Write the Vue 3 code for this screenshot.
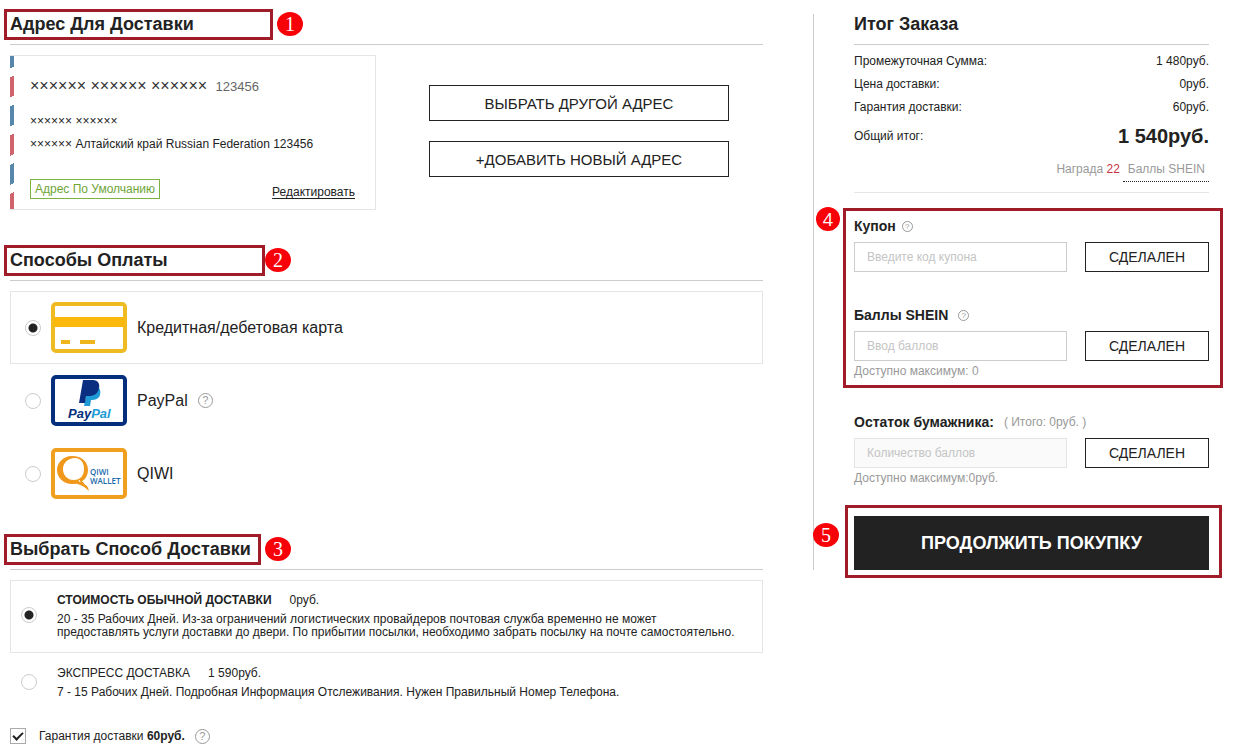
<template>
  <div class="checkout">
    <main class="main-col">
      <section>
        <h2 class="section-title">
          <span class="mark mark-address">Адрес Для Доставки</span>
          <span class="step step-spaced">1</span>
        </h2>
        <div class="address-row">
          <div class="address-card">
            <p class="receiver">×××××× ×××××× ×××××× <span class="phone">123456</span></p>
            <p class="address-line street">×××××× ××××××</p>
            <p class="address-line">×××××× Алтайский край Russian Federation 123456</p>
            <div class="address-footer">
              <span class="default-tag">Адрес По Умолчанию</span>
              <a href="#" class="edit-link">Редактировать</a>
            </div>
          </div>
          <div class="address-actions">
            <button type="button" class="btn-outline btn-address">ВЫБРАТЬ ДРУГОЙ АДРЕС</button>
            <button type="button" class="btn-outline btn-address">+ДОБАВИТЬ НОВЫЙ АДРЕС</button>
          </div>
        </div>
      </section>

      <section class="payment">
        <h2 class="section-title">
          <span class="mark mark-payment">Способы Оплаты</span>
          <span class="step">2</span>
        </h2>
        <label
          v-for="p in payments"
          :key="p.id"
          class="pay-option"
          :class="{ active: payment === p.id }"
        >
          <input type="radio" name="payment" class="radio" :value="p.id" v-model="payment" />
          <svg v-if="p.id === 'card'" class="pay-icon" viewBox="0 0 76 51">
            <rect x="2" y="2" width="72" height="47" rx="3" fill="#fff" stroke="#eebb22" stroke-width="4" />
            <rect x="2" y="15" width="72" height="10" fill="#fdb90b" />
            <path d="M10 40h9M29 40h15" stroke="#efb51c" stroke-width="4" />
          </svg>
          <svg v-else-if="p.id === 'paypal'" class="pay-icon" viewBox="0 0 76 51">
            <rect x="2" y="2" width="72" height="47" rx="3" fill="#fff" stroke="#052f7c" stroke-width="4" />
            <path d="M37 11h8c4 1 5 5 4 9s-5 5-9 5l-1 6h-6z" fill="#1e9bd7" />
            <path d="M32 5h10c5 0 7 4 6 8-1 6-5 8-10 8h-3l-1 7h-6z" fill="#0a2f80" />
            <text x="17" y="43" class="paypal-text" fill="#052f7c">Pay<tspan fill="#1e9bd7">Pal</tspan></text>
          </svg>
          <svg v-else class="pay-icon" viewBox="0 0 76 51">
            <rect x="2" y="2" width="72" height="47" rx="3" fill="#fff" stroke="#f0a01e" stroke-width="4" />
            <path
              fill-rule="evenodd"
              d="M21 8C12 8 6 15 6 22c0 8 7 14 15 14 10 0 16-6 16-14S31 8 21 8zm3 2c6 0 9 5 9 11 0 7-4 11-10 11-7 0-11-5-11-11S17 10 24 10z"
              fill="#f0981c"
            />
            <path d="M18 35c7 0 13 1 20 8-1-5-4-8-8-10z" fill="#f0981c" />
            <path d="M28 32l1 2M33 35l2 2" stroke="#fff" stroke-width="1" />
            <text x="39" y="27" class="qiwi-text">QIWI</text>
            <text x="39" y="36" class="qiwi-text">WALLET</text>
          </svg>
          <span class="pay-name">{{ p.name }}</span>
          <span v-if="p.help" class="help">?</span>
        </label>
      </section>

      <section class="shipping">
        <h2 class="section-title">
          <span class="mark mark-shipping">Выбрать Способ Доставки</span>
          <span class="step step-spaced">3</span>
        </h2>
        <label
          v-for="s in shippings"
          :key="s.id"
          class="ship-option"
          :class="{ active: shipping === s.id }"
        >
          <input type="radio" name="shipping" class="radio" :value="s.id" v-model="shipping" />
          <span class="ship-info">
            <span class="ship-head"><span class="ship-name">{{ s.name }}</span>{{ s.price }}</span>
            <span class="ship-desc">{{ s.desc }}</span>
          </span>
        </label>
        <div class="guarantee">
          <input id="guarantee" type="checkbox" class="checkbox" v-model="guarantee" />
          <label for="guarantee">Гарантия доставки <b>60руб.</b></label>
          <span class="help">?</span>
        </div>
      </section>
    </main>

    <aside class="summary">
      <h2 class="summary-title">Итог Заказа</h2>
      <dl class="totals">
        <div v-for="t in totals" :key="t.label" class="total-row">
          <dt>{{ t.label }}</dt>
          <dd>{{ t.value }}</dd>
        </div>
        <div class="total-row grand">
          <dt>Общий итог:</dt>
          <dd>1 540руб.</dd>
        </div>
      </dl>
      <p class="reward">Награда <span class="reward-num">22</span><span class="reward-points">Баллы SHEIN</span></p>

      <div class="discounts">
        <span class="step step-four">4</span>
        <div class="field">
          <div class="field-label">
            <label for="coupon">Купон</label>
            <span class="help help-small">?</span>
          </div>
          <div class="field-row">
            <input id="coupon" type="text" v-model="coupon" placeholder="Введите код купона" />
            <button type="button" class="btn-outline btn-apply">СДЕЛАЛЕН</button>
          </div>
        </div>
        <div class="field field-points">
          <div class="field-label">
            <label for="points">Баллы SHEIN</label>
            <span class="help help-small help-far">?</span>
          </div>
          <div class="field-row">
            <input id="points" type="text" v-model="points" placeholder="Ввод баллов" />
            <button type="button" class="btn-outline btn-apply">СДЕЛАЛЕН</button>
          </div>
          <p class="note">Доступно максимум: 0</p>
        </div>
      </div>

      <div class="field field-wallet">
        <div class="field-label">
          <label for="wallet">Остаток бумажника:</label>
          <span class="wallet-total">( Итого: 0руб. )</span>
        </div>
        <div class="field-row">
          <input id="wallet" type="text" placeholder="Количество баллов" disabled />
          <button type="button" class="btn-outline btn-apply">СДЕЛАЛЕН</button>
        </div>
        <p class="note">Доступно максимум:0руб.</p>
      </div>

      <div class="submit">
        <span class="step step-five">5</span>
        <button type="button" class="btn-submit">ПРОДОЛЖИТЬ ПОКУПКУ</button>
      </div>
    </aside>
  </div>
</template>

<script setup>
import { ref } from 'vue'

const payment = ref('card')
const shipping = ref('standard')
const guarantee = ref(true)
const coupon = ref('')
const points = ref('')

const payments = [
  { id: 'card', name: 'Кредитная/дебетовая карта' },
  { id: 'paypal', name: 'PayPal', help: true },
  { id: 'qiwi', name: 'QIWI' }
]

const shippings = [
  {
    id: 'standard',
    name: 'СТОИМОСТЬ ОБЫЧНОЙ ДОСТАВКИ',
    price: '0руб.',
    desc: '20 - 35 Рабочих Дней. Из-за ограничений логистических провайдеров почтовая служба временно не может предоставлять услуги доставки до двери. По прибытии посылки, необходимо забрать посылку на почте самостоятельно.'
  },
  {
    id: 'express',
    name: 'ЭКСПРЕСС ДОСТАВКА',
    price: '1 590руб.',
    desc: '7 - 15 Рабочих Дней. Подробная Информация Отслеживания. Нужен Правильный Номер Телефона.'
  }
]

const totals = [
  { label: 'Промежуточная Сумма:', value: '1 480руб.' },
  { label: 'Цена доставки:', value: '0руб.' },
  { label: 'Гарантия доставки:', value: '60руб.' }
]
</script>

<style>
body {
  margin: 0;
  background: #fff;
}
</style>

<style scoped>
.checkout {
  display: flex;
  align-items: flex-start;
  gap: 50px;
  padding: 4px 29px 8px 10px;
  font-family: "Liberation Sans", Arial, sans-serif;
  font-size: 12px;
  color: #222;
}

h2,
p,
dl,
dd {
  margin: 0;
}

button,
input {
  font-family: inherit;
  box-sizing: border-box;
  margin: 0;
}

.main-col {
  flex: 1;
  min-width: 0;
}

.section-title {
  display: flex;
  align-items: center;
  height: 40px;
  margin-bottom: 10px;
  border-bottom: 1px solid #ccc;
  font-size: 18px;
}

/* red frame around a section title */
.mark {
  box-sizing: border-box;
  height: 31px;
  margin-left: -6px;
  padding-left: 3px;
  border: 3px solid #a01c28;
  line-height: 25px;
}

.mark-address {
  width: 269px;
}

.mark-payment {
  width: 261px;
}

.mark-shipping {
  width: 257px;
}

.step {
  width: 26px;
  height: 24px;
  border-radius: 50%;
  background: #f80008;
  color: #fff;
  font-family: "Liberation Serif", serif;
  font-size: 20px;
  font-weight: normal;
  line-height: 24px;
  text-align: center;
}

.step-spaced {
  margin-left: 4px;
}

.address-row {
  display: flex;
  gap: 53px;
}

.address-card {
  position: relative;
  box-sizing: border-box;
  width: 366px;
  padding: 20px 20px 10px 19px;
  border: 1px solid #e5e5e5;
}

.address-card::before {
  content: "";
  position: absolute;
  top: 0;
  bottom: 0;
  left: -1px;
  width: 4px;
  background: repeating-linear-gradient(153deg, #5787ab 0 11px, #fff 11px 19px, #d0646c 19px 37px, #fff 37px 45px, #5787ab 45px 52px);
}

.receiver {
  margin-bottom: 13px;
  color: #333;
  font-size: 16px;
  line-height: 20px;
}

.phone {
  margin-left: 4px;
  color: #666;
  font-size: 13px;
}

.address-line {
  line-height: 23px;
}

.address-footer {
  display: flex;
  align-items: center;
  justify-content: space-between;
  margin-top: 23px;
}

.default-tag {
  padding: 0 4px;
  border: 1px solid #7bb241;
  color: #6ea536;
  line-height: 18px;
}

.edit-link {
  margin-top: 6px;
  color: #222;
  text-underline-offset: 2px;
}

.address-actions {
  display: flex;
  flex: 1;
  flex-direction: column;
  gap: 20px;
  max-width: 300px;
  padding-top: 30px;
}

.btn-outline {
  border: 1px solid #222;
  border-radius: 0;
  background: #fff;
  color: #222;
  cursor: pointer;
}

.btn-address {
  height: 36px;
  font-size: 15px;
}

.payment {
  margin-top: 30px;
}

.pay-option {
  display: flex;
  align-items: center;
  gap: 10px;
  box-sizing: border-box;
  height: 73px;
  padding-left: 14px;
  border: 1px solid transparent;
  font-size: 16px;
}

.pay-option.active,
.ship-option.active {
  border-color: #e5e5e5;
}

.radio {
  flex: none;
  width: 16px;
  height: 16px;
  border: 1px solid #ccc;
  border-radius: 50%;
  appearance: none;
  background: #fff;
}

.radio:checked {
  background: radial-gradient(circle, #222 0 4px, #fff 5px);
}

.pay-icon {
  flex: none;
  width: 76px;
  height: 51px;
}

.paypal-text {
  font-size: 13px;
  font-style: italic;
  font-weight: bold;
}

.qiwi-text {
  fill: #1a6aac;
  font-family: "Open Sans", sans-serif;
  font-size: 8px;
  font-weight: 600;
}

.help {
  flex: none;
  box-sizing: border-box;
  width: 15px;
  height: 15px;
  border: 1px solid #999;
  border-radius: 50%;
  color: #999;
  font-size: 11px;
  line-height: 13px;
  text-align: center;
}

.help-small {
  width: 11px;
  height: 11px;
  font-size: 8px;
  line-height: 9px;
}

.shipping {
  margin-top: 19px;
}

.ship-option {
  display: flex;
  align-items: center;
  gap: 20px;
  padding: 10px 20px 13px 10px;
  border: 1px solid transparent;
}

.ship-info {
  display: flex;
  flex-direction: column;
  gap: 4px;
}

.ship-head {
  line-height: 18px;
}

.ship-name {
  margin-right: 18px;
}

.active .ship-name {
  font-weight: bold;
}

.ship-desc {
  line-height: 13px;
}

.guarantee {
  display: flex;
  align-items: center;
  gap: 10px;
  margin-top: 15px;
}

.guarantee label {
  margin-left: 3px;
}

.checkbox {
  width: 16px;
  height: 16px;
  border: 1px solid #aaa;
  appearance: none;
}

.checkbox:checked::before {
  content: "";
  display: block;
  width: 8px;
  height: 4px;
  margin: 3px 0 0 2px;
  border-bottom: 2px solid #222;
  border-left: 2px solid #222;
  transform: rotate(-45deg);
}

.summary {
  flex: none;
  width: 355px;
  margin-top: 10px;
  padding-left: 40px;
  border-left: 1px solid #ccc;
}

.summary-title {
  padding-bottom: 10px;
  border-bottom: 1px solid #ccc;
  font-size: 18px;
  line-height: 20px;
}

.totals {
  padding-top: 5px;
}

.total-row {
  display: flex;
  align-items: center;
  justify-content: space-between;
  line-height: 23px;
}

.total-row.grand {
  line-height: 34px;
}

.grand dd {
  font-size: 20px;
  font-weight: bold;
}

.reward {
  padding: 4px 0 10px;
  border-bottom: 1px solid #e5e5e5;
  color: #999;
  line-height: 24px;
  text-align: right;
}

.reward-num {
  color: #c8323c;
}

.reward-points {
  display: inline-block;
  margin-left: 3px;
  padding: 0 4px 0 5px;
  border-bottom: 1px dotted #222;
}

.discounts {
  position: relative;
  margin: 15px -14px 0 -11px;
  padding: 5px 11px 3px 8px;
  border: 3px solid #a01c28;
}

.field-label {
  display: flex;
  align-items: center;
  gap: 6px;
  height: 20px;
  font-size: 14px;
}

.field-label label {
  font-weight: bold;
}

.field-row {
  display: flex;
  gap: 18px;
  margin-top: 6px;
}

.field-row input {
  flex: 1;
  min-width: 0;
  height: 30px;
  padding: 0 12px;
  border: 1px solid #ccc;
  border-radius: 0;
  font-size: 12px;
}

.field-row input:disabled {
  border-color: #e5e5e5;
  background: #fafafa;
}

.field-row input::placeholder {
  color: #c4c4c4;
}

.btn-apply {
  width: 124px;
  height: 30px;
  font-size: 14px;
}

.field-points {
  margin-top: 33px;
}

.help-far {
  margin-left: 4px;
}

.note {
  color: #999;
  line-height: 21px;
}

.field-wallet {
  margin-top: 24px;
}

.wallet-total {
  margin-left: 4px;
  color: #999;
  font-size: 12px;
}

.submit {
  position: relative;
  margin-top: 27px;
}

.submit::after {
  content: "";
  position: absolute;
  inset: -11px -13px -8px -9px;
  border: 3px solid #a01c28;
  pointer-events: none;
}

.step-four,
.step-five {
  position: absolute;
}

.step-four {
  top: -4px;
  left: -30px;
  width: 24px;
  font-family: "Open Sans", sans-serif;
  font-size: 18px;
}

.step-five {
  top: 7px;
  left: -41px;
}

.btn-submit {
  display: block;
  width: 100%;
  height: 54px;
  border: none;
  background: #222;
  color: #fff;
  font-size: 18px;
  font-weight: bold;
  cursor: pointer;
}
</style>
